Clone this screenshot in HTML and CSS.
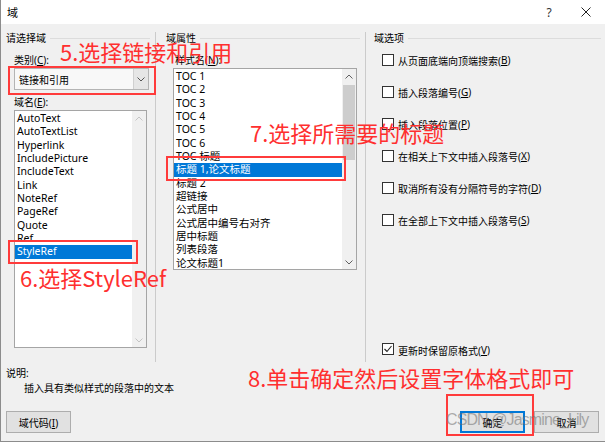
FILE: index.html
```html
<!DOCTYPE html>
<html lang="zh-CN">
<head>
    <meta charset="UTF-8">
    <title>域</title>
    <link rel="stylesheet" href="styles.css">
</head>
<body>
    <div class="dialog">
        <div class="titlebar">
            <span class="title">域</span>
            <span class="help">?</span>
            <span class="close">
                <svg width="10" height="10" viewBox="0 0 10 10"><path d="M0.5 0.5L9.5 9.5M9.5 0.5L0.5 9.5" stroke="#222" stroke-width="1" fill="none"/></svg>
            </span>
        </div>

        <div class="panes">
            <div class="pane pane-left">
                <div class="group-title"><span>请选择域</span></div>
                <div class="field">
                    <div class="label">类别(<u>C</u>):</div>
                    <div class="combo">
                        <span class="combo-value">链接和引用</span>
                        <span class="combo-btn">
                            <svg width="8" height="5" viewBox="0 0 8 5"><path d="M0.5 0.5L4 4L7.5 0.5" stroke="#555" fill="none"/></svg>
                        </span>
                    </div>
                    <div class="label gap">域名(<u>E</u>):</div>
                    <div class="listbox names">
                        <ul class="items">
                            <li>AutoText</li>
                            <li>AutoTextList</li>
                            <li>Hyperlink</li>
                            <li>IncludePicture</li>
                            <li>IncludeText</li>
                            <li>Link</li>
                            <li>NoteRef</li>
                            <li>PageRef</li>
                            <li>Quote</li>
                            <li>Ref</li>
                            <li class="selected">StyleRef</li>
                        </ul>
                        <div class="scrollbar disabled">
                            <span class="arrow"><svg width="8" height="5" viewBox="0 0 8 5"><path d="M0.5 4.5L4 1L7.5 4.5" fill="none"/></svg></span>
                            <span class="track"></span>
                            <span class="arrow"><svg width="8" height="5" viewBox="0 0 8 5"><path d="M0.5 0.5L4 4L7.5 0.5" fill="none"/></svg></span>
                        </div>
                    </div>
                </div>
            </div>

            <div class="pane pane-mid">
                <div class="group-title"><span>域属性</span></div>
                <div class="field">
                    <div class="label indent">样式名(<u>N</u>):</div>
                    <div class="listbox styles">
                        <ul class="items">
                            <li>TOC 1</li>
                            <li>TOC 2</li>
                            <li>TOC 3</li>
                            <li>TOC 4</li>
                            <li>TOC 5</li>
                            <li>TOC 6</li>
                            <li>TOC 标题</li>
                            <li class="selected">标题 1,论文标题</li>
                            <li>标题 2</li>
                            <li>超链接</li>
                            <li>公式居中</li>
                            <li>公式居中编号右对齐</li>
                            <li>居中标题</li>
                            <li>列表段落</li>
                            <li>论文标题1</li>
                        </ul>
                        <div class="scrollbar">
                            <span class="arrow"><svg width="8" height="5" viewBox="0 0 8 5"><path d="M0.5 4.5L4 1L7.5 4.5" fill="none"/></svg></span>
                            <span class="track"><span class="thumb"></span></span>
                            <span class="arrow"><svg width="8" height="5" viewBox="0 0 8 5"><path d="M0.5 0.5L4 4L7.5 0.5" fill="none"/></svg></span>
                        </div>
                    </div>
                </div>
            </div>

            <div class="pane pane-right">
                <div class="group-title"><span>域选项</span></div>
                <div class="option"><span class="check"></span>从页面底端向顶端搜索(<u>B</u>)</div>
                <div class="option"><span class="check"></span>插入段落编号(<u>G</u>)</div>
                <div class="option"><span class="check"></span>插入段落位置(<u>P</u>)</div>
                <div class="option"><span class="check"></span>在相关上下文中插入段落号(<u>X</u>)</div>
                <div class="option"><span class="check"></span>取消所有没有分隔符号的字符(<u>D</u>)</div>
                <div class="option"><span class="check"></span>在全部上下文中插入段落号(<u>S</u>)</div>
                <div class="option keep">
                    <span class="check checked">
                        <svg width="10" height="10" viewBox="0 0 10 10"><path d="M1.5 5L4 7.5L8.5 2" stroke="#222" stroke-width="1.1" fill="none"/></svg>
                    </span>更新时保留原格式(<u>V</u>)
                </div>
            </div>
        </div>

        <div class="desc">
            <div class="desc-label">说明:</div>
            <div class="desc-text">插入具有类似样式的段落中的文本</div>
        </div>

        <div class="buttons">
            <button class="btn">域代码(<u>I</u>)</button>
            <span class="spacer"></span>
            <button class="btn default">确定</button>
            <button class="btn">取消</button>
        </div>

        <div class="note note-5">5.选择链接和引用</div>
        <div class="note note-6">6.选择StyleRef</div>
        <div class="note note-7">7.选择所需要的标题</div>
        <div class="note note-8">8.单击确定然后设置字体格式即可</div>

        <div class="mark mark-combo"></div>
        <div class="mark mark-name"></div>
        <div class="mark mark-style"></div>
        <div class="mark mark-ok"></div>

        <div class="watermark">CSDN @Jasmine_Lily</div>
    </div>
</body>
</html>
```

FILE: styles.css
```css
body {
    margin: 0;
}
.dialog {
    position: relative;
    width: 605px;
    height: 442px;
    box-sizing: border-box;
    background: #f0f0f0;
    border-left: 1px solid #8c8c8c;
    border-bottom: 1px solid #8c8c8c;
    font-family: "Noto Sans", "Noto Sans CJK SC", sans-serif;
    font-size: 10px;
    color: #000;
    overflow: hidden;
}
.titlebar {
    height: 24px;
    background: #fff;
    display: flex;
    align-items: center;
    padding-left: 6px;
}
.title {
    flex: 1;
    font-size: 11px;
}
.help {
    width: 12px;
    text-align: center;
    font-size: 12px;
    color: #333;
    margin-right: 26px;
}
.close {
    display: flex;
    margin-right: 14px;
}

/* three columns */
.panes {
    display: flex;
    margin-top: 8px;
    height: 330px;
}
.pane {
    display: flex;
    flex-direction: column;
}
.pane-left {
    width: 149px;
    padding-left: 5px;
    border-right: 1px solid #cbcbcb;
}
.pane-mid {
    width: 199px;
    padding-left: 10px;
    border-right: 1px solid #cbcbcb;
}
.pane-right {
    flex: 1;
    padding-left: 8px;
}
.group-title {
    display: flex;
    align-items: center;
    height: 12px;
    line-height: 12px;
}
.group-title::after {
    content: "";
    flex: 1;
    border-top: 1px solid #dcdcdc;
    margin: 1px 5px 0 4px;
}
.pane-right .group-title::after {
    margin-right: 4px;
}
.pane-left .field {
    margin-left: 8px;
}
.pane-mid .field {
    margin-left: 7px;
}
.label {
    line-height: 12px;
    margin-top: 10px;
}
.label.gap {
    margin-top: 6px;
}
.label.indent {
    padding-left: 2px;
}

.combo {
    margin-top: 2px;
    width: 135px;
    height: 22px;
    box-sizing: border-box;
    border: 1px solid #b4b4b4;
    background: #f8f8f8;
    display: flex;
    align-items: center;
}
.combo-value {
    flex: 1;
    padding-left: 4px;
}
.combo-btn {
    width: 14px;
    height: 20px;
    background: #e6e6e6;
    border-left: 1px solid #d0d0d0;
    display: flex;
    align-items: center;
    justify-content: center;
}

.listbox {
    margin-top: 2px;
    box-sizing: border-box;
    border: 1px solid #a5a5a5;
    background: #fff;
    display: flex;
    overflow: hidden;
}
.listbox.names {
    width: 133px;
    height: 238px;
}
.listbox.styles {
    width: 184px;
    height: 202px;
}
.items {
    flex: 1;
    list-style: none;
    margin: 0;
    padding: 1px 0 0 0;
    overflow: hidden;
    font-size: 10.5px;
}
.items li {
    height: 13.33px;
    line-height: 13.33px;
    padding-left: 2px;
    white-space: nowrap;
}
.items li.selected {
    background: #0078d7;
    color: #fff;
}
.scrollbar {
    width: 14px;
    background: #f0f0f0;
    display: flex;
    flex-direction: column;
}
.scrollbar .arrow {
    height: 14px;
    display: flex;
    align-items: center;
    justify-content: center;
}
.scrollbar .arrow path {
    stroke: #606060;
}
.scrollbar.disabled .arrow path {
    stroke: #c4c4c4;
}
.scrollbar .track {
    flex: 1;
    padding: 2px 1px 0 1px;
}
.thumb {
    display: block;
    height: 75px;
    background: #cdcdcd;
}

/* options on the right */
.option {
    height: 32px;
    display: flex;
    align-items: center;
    padding-left: 8px;
}
.check {
    width: 10px;
    height: 10px;
    border: 1px solid #333;
    background: #fff;
    margin-right: 4px;
    display: flex;
}
.option.keep {
    margin-top: auto;
    height: 19px;
    align-items: flex-start;
}

.desc {
    padding: 5px 0 0 5px;
}
.desc-label {
    line-height: 12px;
}
.desc-text {
    line-height: 12px;
    margin-top: 3px;
    padding-left: 18px;
}

.buttons {
    display: flex;
    margin-top: 17px;
    padding: 0 6px 0 5px;
}
.spacer {
    flex: 1;
}
.btn {
    width: 65px;
    height: 22px;
    box-sizing: border-box;
    background: #e1e1e1;
    border: 1px solid #adadad;
    font-family: "Noto Sans", "Noto Sans CJK SC", sans-serif;
    font-size: 10px;
    color: #000;
    padding: 0;
    margin-left: 9px;
}
.btn:first-child {
    margin-left: 0;
}
.btn.default {
    border-color: #0078d7;
    box-shadow: inset 0 0 0 1px #0078d7;
}

/* red annotations on top of the dialog */
.note {
    position: absolute;
    font-family: "Noto Sans CJK SC", sans-serif;
    font-size: 22px;
    line-height: 22px;
    color: #ff2f2f;
    white-space: nowrap;
}
.note-5 { left: 59px; top: 40px; }
.note-6 { left: 19px; top: 266px; }
.note-7 { left: 249px; top: 121px; }
.note-8 { left: 247px; top: 366px; }
.mark {
    position: absolute;
    border: 2px solid #ff3b3b;
    box-sizing: border-box;
}
.mark-combo { left: 7px; top: 66px; width: 148px; height: 29px; }
.mark-name { left: 7px; top: 240px; width: 130px; height: 24px; }
.mark-style { left: 165px; top: 156px; width: 180px; height: 25px; }
.mark-ok { left: 445px; top: 394px; width: 88px; height: 42px; }
.watermark {
    position: absolute;
    left: 445px;
    top: 411px;
    font-family: "Liberation Sans", sans-serif;
    font-size: 16px;
    letter-spacing: -0.9px;
    color: rgba(110, 110, 110, 0.55);
    white-space: nowrap;
}
```
